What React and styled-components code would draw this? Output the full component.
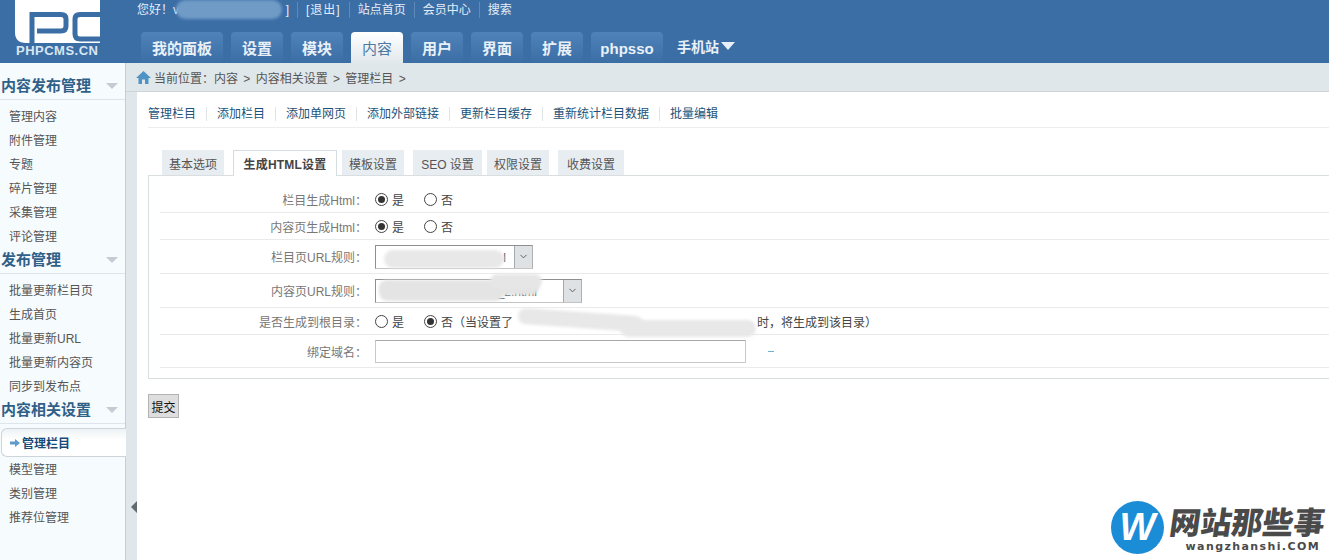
import React from 'react';
import styled, { createGlobalStyle } from 'styled-components';
import { ChevronDown } from 'lucide-react';

const GlobalStyle = createGlobalStyle`
  html, body {
    margin: 0;
    padding: 0;
    background: #fff;
    overflow: hidden;
  }
  body {
    font: 12px "Liberation Sans", "Noto Sans CJK SC", sans-serif;
    color: #444;
  }
`;

const Page = styled.div`
  position: relative;
  width: 1329px;
  height: 560px;
  overflow: hidden;
`;

const Header = styled.header`
  display: flex;
  height: 63px;
  background: #3c6ea6;
`;

const LogoBox = styled.div`
  position: relative;
  width: 126px;
  flex: none;
  height: 63px;
`;

const LogoText = styled.span`
  position: absolute;
  left: 16px;
  top: 43px;
  font: 700 13px/15px "Liberation Sans", sans-serif;
  letter-spacing: 0.5px;
  color: #d8e6f2;
`;

const HeaderMain = styled.div`
  flex: 1;
  padding-left: 11px;
  display: flex;
  flex-direction: column;
`;

const TopLinks = styled.div`
  height: 32px;
  display: flex;
  align-items: flex-start;
  padding-top: 2px;
  box-sizing: border-box;
  color: #e4edf6;
  line-height: 16px;
`;

const TopLink = styled.span`
  padding-right: 8px;
  margin-right: 8px;
  border-right: ${p => (p.$last ? 'none' : '1px solid #5c8aba')};
  height: 16px;
  letter-spacing: ${p => p.$spaced || 0}px;
`;

const Greeting = styled(TopLink)`
  display: flex;
  justify-content: space-between;
  box-sizing: border-box;
  width: 161px;
  white-space: nowrap;
`;

const MainNav = styled.nav`
  display: flex;
  padding-left: 4px;
  gap: 8px;
  height: 31px;
`;

const NavTab = styled.div`
  width: ${p => p.$width}px;
  box-sizing: border-box;
  height: 31px;
  border-radius: 4px 4px 0 0;
  text-align: center;
  font-size: 15px;
  line-height: 33px;
  color: ${p => (p.$active ? '#4d7aa5' : '#e9f1f8')};
  background: ${p =>
    p.$active
      ? 'linear-gradient(#ffffff, #e1e8ec)'
      : 'linear-gradient(#4f82b9, #3c6ea6)'};
  font-weight: ${p => (p.$active ? 400 : 700)};
`;

const PhoneSite = styled.div`
  display: flex;
  align-items: center;
  gap: 2px;
  margin-left: 6px;
  height: 28px;
  font-size: 14px;
  font-weight: 700;
  color: #e9f1f8;
`;

const Body = styled.div`
  display: flex;
  height: 497px;
`;

const Sidebar = styled.aside`
  width: 125px;
  flex: none;
  background: #f6fbfe;
  border-right: 1px solid #c5ced4;
  padding-top: 10px;
`;

const SideHeading = styled.div`
  height: 26px;
  margin-top: ${p => p.$gap || 0}px;
  display: flex;
  align-items: center;
  justify-content: space-between;
  padding: 0 7px 0 1px;
  border-bottom: 1px solid #dde5ea;
  font-size: 15px;
  font-weight: 700;
  line-height: 26px;
  color: #2f6088;
`;

const HeadingCaret = styled.i`
  width: 0;
  height: 0;
  border-left: 6px solid transparent;
  border-right: 6px solid transparent;
  border-top: 6px solid #c3ccd2;
`;

const SideList = styled.ul`
  list-style: none;
  margin: 0;
  padding: 4px 0 0;
`;

const SideItem = styled.li`
  height: 24px;
  line-height: 26px;
  padding-left: 9px;
  color: #555;
`;

const ActiveItem = styled.li`
  display: flex;
  align-items: center;
  gap: 2px;
  height: 27px;
  margin: 0 -1px 0 1px;
  padding-left: 8px;
  border: 1px solid #ccd5da;
  border-right: none;
  border-radius: 6px 0 0 6px;
  background: linear-gradient(#eef2f4, #fff 40%);
  color: #164a78;
  font-weight: 700;
`;

const Gutter = styled.div`
  position: relative;
  width: 11px;
  flex: none;
  background: #e0e7ea;
`;

const CollapseArrow = styled.i`
  position: absolute;
  left: 5px;
  top: 438px;
  width: 0;
  height: 0;
  border-top: 6px solid transparent;
  border-bottom: 6px solid transparent;
  border-right: 6px solid #5f6b70;
`;

const Main = styled.main`
  flex: 1;
  min-width: 0;
`;

const Crumbs = styled.div`
  display: flex;
  align-items: center;
  gap: 3px;
  height: 28px;
  background: #e0e7ea;
  border-bottom: 1px solid #cdd4d8;
  margin-left: -11px;
  padding-left: 10px;
  position: relative;
  color: #555;
  word-spacing: 2px;
`;

const Content = styled.div`
  padding: 0 0 0 11px;
  background: #fff;
`;

const SubNav = styled.div`
  display: flex;
  align-items: center;
  box-sizing: border-box;
  height: 36px;
  padding-top: 8px;
  border-bottom: 1px solid #eceeef;
  color: #1e5278;
`;

const SubLink = styled.span`
  padding-right: 10px;
  margin-right: 10px;
  height: 14px;
  line-height: 14px;
  border-right: ${p => (p.$last ? 'none' : '1px solid #dfe4e7')};
`;

const Tabs = styled.div`
  display: flex;
  align-items: flex-start;
  margin: 22px 0 -1px 14px;
  height: 26px;
  position: relative;
  z-index: 1;
`;

const Tab = styled.div`
  box-sizing: border-box;
  width: ${p => p.$width}px;
  height: ${p => (p.$active ? 26 : 25)}px;
  margin-right: ${p => p.$gap}px;
  text-align: center;
  line-height: 28px;
  letter-spacing: ${p => (p.$active ? 0.2 : 0)}px;
  color: ${p => (p.$active ? '#444' : '#555')};
  font-weight: ${p => (p.$active ? 700 : 400)};
  background: ${p => (p.$active ? '#fff' : '#e8edf2')};
  border: 1px solid ${p => (p.$active ? '#d6dde2' : '#e8edf2')};
  border-bottom: none;
`;

const FormBox = styled.div`
  box-sizing: border-box;
  height: 204px;
  padding: 11px 0 0 11px;
  border: 1px solid #d9dee1;
  border-right: none;
`;

const Row = styled.div`
  display: flex;
  align-items: center;
  box-sizing: border-box;
  height: ${p => p.$height}px;
  border-bottom: 1px solid #e8eaeb;
`;

const Label = styled.div`
  width: 207px;
  flex: none;
  text-align: right;
  color: #777;
  padding-right: 8px;
  white-space: nowrap;
`;

const Option = styled.label`
  display: inline-flex;
  align-items: center;
  gap: 4px;
  width: ${p => p.$width || 49}px;
  color: #444;
`;

const Radio = styled.span`
  box-sizing: border-box;
  width: 13px;
  height: 13px;
  border: 1px solid #444;
  border-radius: 50%;
  background: #fff;
  display: flex;
  align-items: center;
  justify-content: center;
  &::after {
    content: '';
    display: ${p => (p.$on ? 'block' : 'none')};
    width: 7px;
    height: 7px;
    border-radius: 50%;
    background: #333;
  }
`;

const Select = styled.div`
  box-sizing: border-box;
  display: flex;
  align-items: stretch;
  width: ${p => p.$width}px;
  height: 24px;
  border: 1px solid #8f8f8f;
  border-right-color: #b0b0b0;
  border-bottom-color: #c4c4c4;
  background: #fff;
`;

const SelectValue = styled.span`
  flex: 1;
  text-align: right;
  padding-right: ${p => p.$inset}px;
  line-height: 24px;
  color: #555;
`;

const SelectButton = styled.span`
  width: 17px;
  display: flex;
  align-items: center;
  justify-content: center;
  background: #dfe2e5;
  border-left: 1px solid #a6a9ab;
  color: #555;
`;

const TextInput = styled.div`
  box-sizing: border-box;
  width: 371px;
  height: 23px;
  border: 1px solid #c9c9c9;
  border-top-color: #a8a8a8;
`;

const Dash = styled.span`
  margin-left: 22px;
  width: 6px;
  height: 1px;
  background: #6fb3cc;
`;

const Note = styled.span`
  margin-left: -20px;
  color: #444;
  white-space: nowrap;
`;

const NoteGap = styled.span`
  display: inline-block;
  width: 244px;
`;

const SubmitButton = styled.button`
  display: block;
  box-sizing: border-box;
  width: 31px;
  height: 24px;
  margin-top: 15px;
  padding: 0;
  border: 1px solid #b2b2b2;
  background: #dedede;
  color: #111;
  font: 12px "Liberation Sans", "Noto Sans CJK SC", sans-serif;
`;

/* the smeared-out parts of the original screenshot */
const Smear = styled.div`
  position: absolute;
  left: ${p => p.$x}px;
  top: ${p => p.$y}px;
  width: ${p => p.$w}px;
  height: ${p => p.$h}px;
  background: ${p => p.$color};
  border-radius: ${p => p.$h / 2}px;
  filter: blur(1.5px);
  transform: rotate(${p => p.$rotate || 0}deg);
`;

const Mark = styled.div`
  position: absolute;
  left: 1111px;
  top: 501px;
  display: flex;
  align-items: center;
  gap: 6px;
`;

const MarkCircle = styled.div`
  width: 53px;
  height: 53px;
  border-radius: 50%;
  background: #1b8cd6;
  color: #fff;
  font: italic 700 38px/52px "Liberation Sans", sans-serif;
  text-align: center;
`;

const MarkText = styled.div`
  display: flex;
  flex-direction: column;
  align-items: flex-end;
  color: #4a4a4a;
`;

const MarkTitle = styled.div`
  font: 900 31px/38px "Noto Sans CJK SC", sans-serif;
  width: 156px;
  white-space: nowrap;
  transform: skewX(-8deg);
`;

const MarkSub = styled.div`
  font: 700 11px/13px "DejaVu Sans", sans-serif;
  letter-spacing: 1.4px;
  margin-right: 6px;
`;

const tabs = [
  ['我的面板', 82],
  ['设置', 52],
  ['模块', 52],
  ['内容', 52, true],
  ['用户', 52],
  ['界面', 52],
  ['扩展', 52],
  ['phpsso', 72],
];

const sideMenu = [
  { title: '内容发布管理', items: ['管理内容', '附件管理', '专题', '碎片管理', '采集管理', '评论管理'] },
  { title: '发布管理', items: ['批量更新栏目页', '生成首页', '批量更新URL', '批量更新内容页', '同步到发布点'] },
];

const subLinks = ['管理栏目', '添加栏目', '添加单网页', '添加外部链接', '更新栏目缓存', '重新统计栏目数据', '批量编辑'];

const formTabs = [
  ['基本选项', 62, 9],
  ['生成HTML设置', 104, 5, true],
  ['模板设置', 62, 9],
  ['SEO 设置', 69, 5],
  ['权限设置', 62, 9],
  ['收费设置', 66, 0],
];

function Logo() {
  return (
    <LogoBox>
      <svg width="126" height="63" viewBox="0 0 126 63">
        <path d="M15 0H100V43H26Q15 43 15 32Z" fill="#fff" />
        <path d="M32 43V14.500H61Q66 14.500 66 19V26Q66 31 61 31H37" fill="none" stroke="#3c6ea6" strokeWidth="5" />
        <path d="M100 14.500H80Q75 14.500 75 19V34Q75 39 80 39H100" fill="none" stroke="#3c6ea6" strokeWidth="5" />
      </svg>
      <LogoText>PHPCMS.CN</LogoText>
    </LogoBox>
  );
}

function YesNo({ yes }) {
  return (
    <>
      <Option><Radio $on={yes} />是</Option>
      <Option><Radio $on={!yes} />否</Option>
    </>
  );
}

export default function App() {
  return (
    <Page>
      <GlobalStyle />
      <Header>
        <Logo />
        <HeaderMain>
          <TopLinks>
            <Greeting><span>您好！v</span><span>]</span></Greeting>
            <TopLink $spaced={1}>[退出]</TopLink>
            <TopLink>站点首页</TopLink>
            <TopLink>会员中心</TopLink>
            <TopLink $last>搜索</TopLink>
          </TopLinks>
          <MainNav>
            {tabs.map(([name, width, active]) => (
              <NavTab key={name} $width={width} $active={active}>{name}</NavTab>
            ))}
            <PhoneSite>
              手机站
              <svg width="14" height="8" viewBox="0 0 14 8"><path d="M0 0H14L7 8Z" fill="#e9f1f8" /></svg>
            </PhoneSite>
          </MainNav>
        </HeaderMain>
      </Header>
      <Body>
        <Sidebar>
          {sideMenu.map((group, i) => (
            <div key={group.title}>
              <SideHeading $gap={i ? -1 : 0}>{group.title}<HeadingCaret /></SideHeading>
              <SideList>
                {group.items.map(item => <SideItem key={item}>{item}</SideItem>)}
              </SideList>
            </div>
          ))}
          <SideHeading $gap={-1}>内容相关设置<HeadingCaret /></SideHeading>
          <SideList>
            <ActiveItem>
              <svg width="10" height="8" viewBox="0 0 10 8"><path d="M0 2.500H5V0L10 4L5 8V5.500H0Z" fill="#5f9cc9" /></svg>
              管理栏目
            </ActiveItem>
            <SideItem>模型管理</SideItem>
            <SideItem>类别管理</SideItem>
            <SideItem>推荐位管理</SideItem>
          </SideList>
        </Sidebar>
        <Gutter><CollapseArrow /></Gutter>
        <Main>
          <Crumbs>
            <svg width="15" height="13" viewBox="0 0 15 13">
              <path d="M7.500 0L15 7H12.500V13H9V8.500H6V13H2.500V7H0Z" fill="#4f93c4" />
            </svg>
            当前位置：内容 &gt; 内容相关设置 &gt; 管理栏目 &gt;
          </Crumbs>
          <Content>
            <SubNav>
              {subLinks.map((link, i) => (
                <SubLink key={link} $last={i === subLinks.length - 1}>{link}</SubLink>
              ))}
            </SubNav>
            <Tabs>
              {formTabs.map(([name, width, gap, active]) => (
                <Tab key={name} $width={width} $gap={gap} $active={active}>{name}</Tab>
              ))}
            </Tabs>
            <FormBox>
              <Row $height={26}><Label>栏目生成Html：</Label><YesNo yes /></Row>
              <Row $height={27}><Label>内容页生成Html：</Label><YesNo yes /></Row>
              <Row $height={34}>
                <Label>栏目页URL规则：</Label>
                <Select $width={158}>
                  <SelectValue $inset={8}>l</SelectValue>
                  <SelectButton><ChevronDown size={11} /></SelectButton>
                </Select>
              </Row>
              <Row $height={34}>
                <Label>内容页URL规则：</Label>
                <Select $width={207}>
                  <SelectValue $inset={26}>_2.html</SelectValue>
                  <SelectButton><ChevronDown size={11} /></SelectButton>
                </Select>
              </Row>
              <Row $height={27}>
                <Label>是否生成到根目录：</Label>
                <YesNo />
                <Note>（当设置了<NoteGap />时，将生成到该目录）</Note>
              </Row>
              <Row $height={33}>
                <Label>绑定域名：</Label>
                <TextInput />
                <Dash />
              </Row>
            </FormBox>
            <SubmitButton>提交</SubmitButton>
          </Content>
        </Main>
      </Body>
      <Smear $x={176} $y={0} $w={106} $h={19} $color="#6f9bc6" />
      <Smear $x={384} $y={250} $w={120} $h={18} $color="#e8e8e8" />
      <Smear $x={379} $y={280} $w={160} $h={15} $color="#e4e4e4" />
      <Smear $x={379} $y={284} $w={125} $h={17} $color="#e4e4e4" />
      <Smear $x={490} $y={274} $w={52} $h={15} $color="#e6e6e6" />
      <Smear $x={518} $y={312} $w={125} $h={16} $rotate={4} $color="#e8e8e8" />
      <Smear $x={620} $y={320} $w={136} $h={17} $color="#e8e8e8" />
      <Mark>
        <MarkCircle>W</MarkCircle>
        <MarkText>
          <MarkTitle>网站那些事</MarkTitle>
          <MarkSub>wangzhanshi.COM</MarkSub>
        </MarkText>
      </Mark>
    </Page>
  );
}
